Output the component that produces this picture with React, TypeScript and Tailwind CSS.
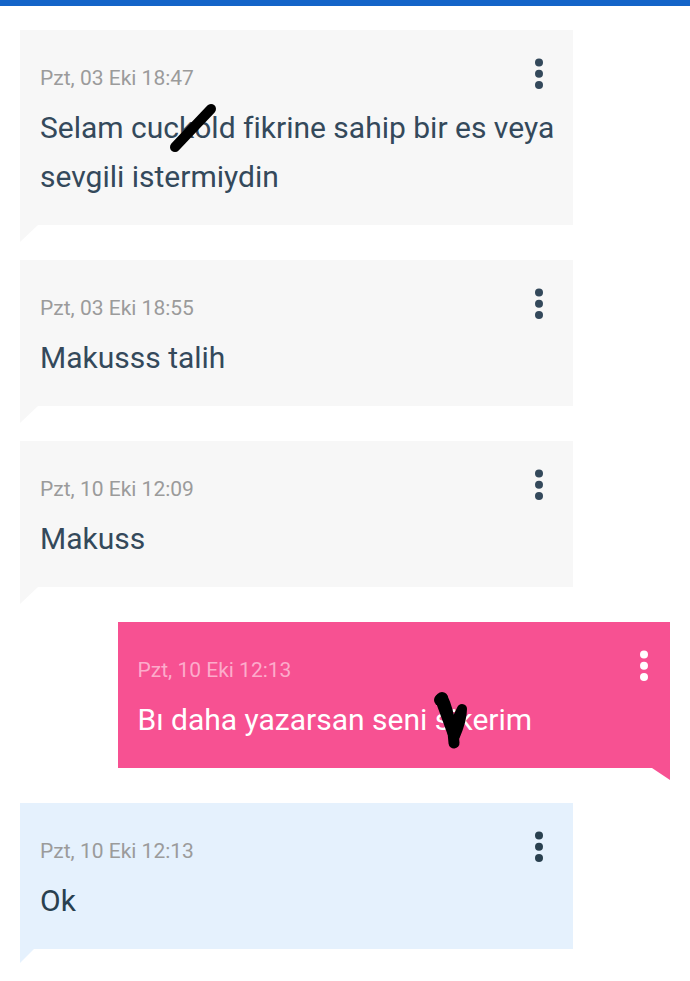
import { ReactNode } from 'react'
import clsx from 'clsx'

type Tone = 'gray' | 'pink' | 'blue'

type Message = {
  id: number
  date: string
  tone: Tone
  text: ReactNode
}

type ScribbleProps = {
  word: string
  children: ReactNode
}

const Scribble = ({ word, children }: ScribbleProps) => (
  <span className="relative">
    {word}
    <svg className="absolute left-0 top-0 overflow-visible" width="104" height="36" fill="none" stroke="#000" strokeLinecap="round" strokeLinejoin="round" aria-hidden="true">
      {children}
    </svg>
  </span>
)

const messages: Message[] = [
  {
    id: 1,
    date: 'Pzt, 03 Eki 18:47',
    tone: 'gray',
    text: (
      <>
        Selam{' '}
        <Scribble word="cuckold">
          <path d="M44 37L80 -1" strokeWidth="10" />
        </Scribble>{' '}
        fikrine sahip bir es veya sevgili istermiydin
      </>
    ),
  },
  { id: 2, date: 'Pzt, 03 Eki 18:55', tone: 'gray', text: 'Makusss talih' },
  { id: 3, date: 'Pzt, 10 Eki 12:09', tone: 'gray', text: 'Makuss' },
  {
    id: 4,
    date: 'Pzt, 10 Eki 12:13',
    tone: 'pink',
    text: (
      <>
        Bı daha yazarsan seni{' '}
        <Scribble word="sikerim">
          <path d="M5 -3L8 -4C13 6 15 17 17 28L27 7C27 17 23 27 20 34L17 30Z" fill="#000" strokeWidth="10" />
          <path d="M5 -2L7 -4" strokeWidth="12" />
          <path d="M18 30L19 41" strokeWidth="11" />
        </Scribble>
      </>
    ),
  },
  { id: 5, date: 'Pzt, 10 Eki 12:13', tone: 'blue', text: 'Ok' },
]

const bubbleTones: Record<Tone, string> = {
  gray: 'self-start bg-[#f7f7f7] text-[#34495b]',
  pink: 'self-end bg-[#f75192] text-white',
  blue: 'self-start bg-[#e5f1fd] text-[#29404f]',
}

const tailTones: Record<Tone, string> = {
  gray: 'left-0 h-[17px] w-[18px] bg-[#f7f7f7] [clip-path:polygon(0_0,100%_0,0_100%)]',
  pink: 'right-0 h-3 w-[18px] bg-[#f75192] [clip-path:polygon(0_0,100%_0,100%_100%)]',
  blue: 'left-0 h-[14px] w-[14px] bg-[#e5f1fd] [clip-path:polygon(0_0,100%_0,0_100%)]',
}

const MessageBubble = ({ message }: { message: Message }) => {
  const { tone, date, text } = message

  return (
    <li className={clsx('relative w-[85%] py-6 pr-4 pl-5', bubbleTones[tone])}>
      <time className={clsx('block text-[21px] leading-[49px]', tone === 'pink' ? 'text-[#fcaccb]' : 'text-[#9b9b9b]')}>{date}</time>
      <p className="text-[30px] leading-[49px] [font-variant-ligatures:none]">{text}</p>
      <button
        type="button"
        aria-label="Mesaj seçenekleri"
        className={clsx('absolute top-6 flex h-10 w-6 items-center justify-center', tone === 'pink' ? 'right-[14px]' : 'right-[22px]')}
      >
        <svg width="8" height="32" viewBox="0 0 8 32" fill="currentColor">
          <circle cx="4" cy="4.5" r="4" />
          <circle cx="4" cy="15.7" r="4" />
          <circle cx="4" cy="27" r="4" />
        </svg>
      </button>
      <span className={clsx('absolute top-full', tailTones[tone])} />
    </li>
  )
}

const App = () => {
  return (
    <div className="min-h-screen bg-white font-['Roboto',sans-serif]">
      <div className="h-[6px] bg-[#1464c8]" />
      <main className="px-5 pt-6 pb-3">
        <ul className="flex flex-col gap-[35px]">
          {messages.map((message) => (
            <MessageBubble key={message.id} message={message} />
          ))}
        </ul>
      </main>
    </div>
  )
}

export default App
